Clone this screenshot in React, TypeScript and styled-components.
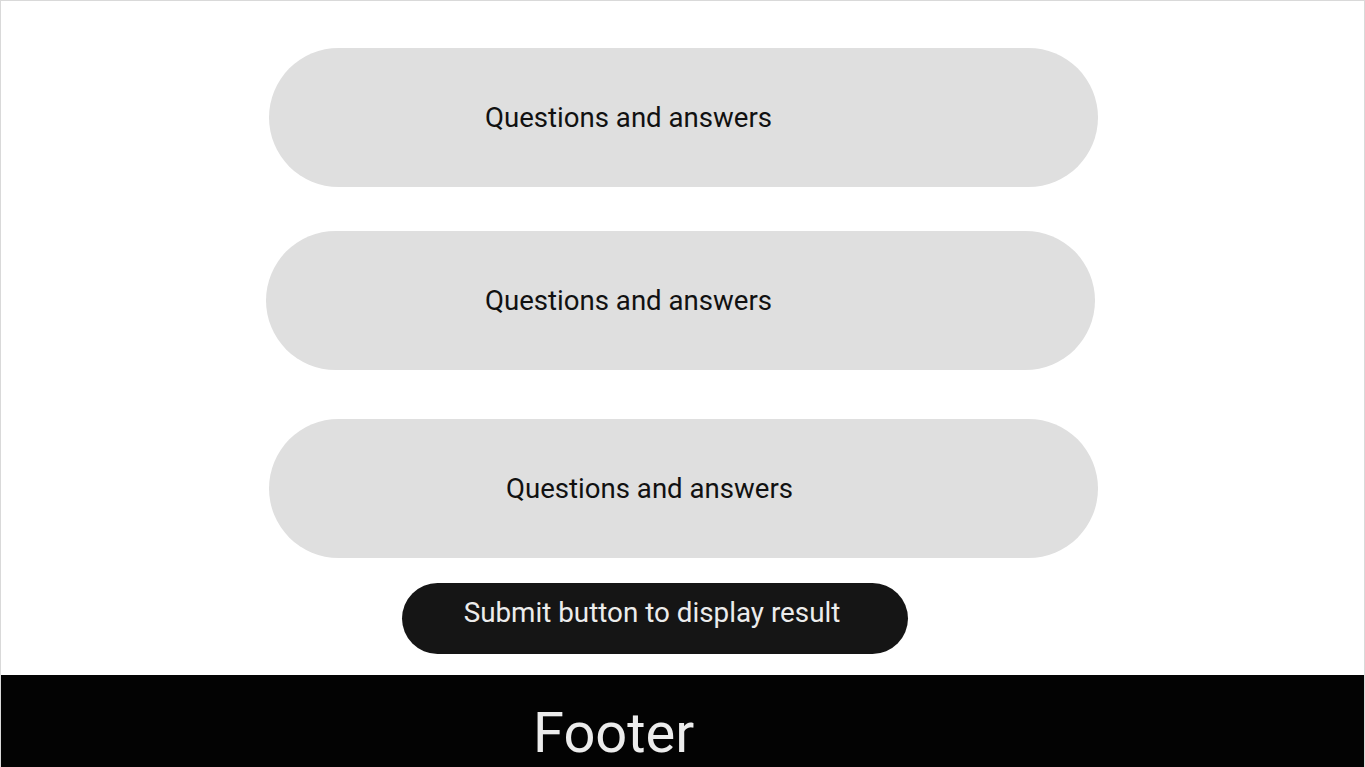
import React from 'react';
import styled, { createGlobalStyle } from 'styled-components';

const GlobalStyle = createGlobalStyle`
  html, body {
    margin: 0;
    padding: 0;
    background: #ffffff;
    font-family: Roboto, "Liberation Sans", Arial, sans-serif;
  }
`;

const Page = styled.div`
  border: 1px solid #d9d9d9;
  border-bottom: none;
  min-height: 766px;
  display: flex;
  flex-direction: column;
  overflow: hidden;
`;

const Main = styled.main`
  display: flex;
  flex-direction: column;
  align-items: flex-start;
  padding-top: 47px;
`;

const Card = styled.div<{ $left: number; $indent: number; $gap: number }>`
  box-sizing: border-box;
  width: 829px;
  height: 139px;
  margin-left: ${(p) => p.$left}px;
  margin-top: ${(p) => p.$gap}px;
  padding-left: ${(p) => p.$indent}px;
  border-radius: 70px;
  background: #dfdfdf;
  display: flex;
  align-items: center;
  font-size: 27.6px;
  color: #111111;
`;

const SubmitButton = styled.button`
  box-sizing: border-box;
  width: 506px;
  height: 71px;
  margin-left: 401px;
  margin-top: 25px;
  border: none;
  border-radius: 36px;
  background: #151515;
  color: #ececec;
  font-family: Roboto, "Liberation Sans", Arial, sans-serif;
  font-size: 27.8px;
  padding: 0 6px 12px 0;
  cursor: pointer;
`;

const Footer = styled.footer`
  margin-top: 21px;
  height: 100px;
  background: #030303;
  box-sizing: border-box;
  padding: 25px 0 0 532px;
  color: #ececec;
  font-size: 56px;
`;

const cards = [
  { left: 268, indent: 216, gap: 0 },
  { left: 265, indent: 219, gap: 44 },
  { left: 268, indent: 237, gap: 49 },
];

export default function App() {
  return (
    <>
      <GlobalStyle />
      <Page>
        <Main>
          {cards.map((c, i) => (
            <Card key={i} $left={c.left} $indent={c.indent} $gap={c.gap}>
              Questions and answers
            </Card>
          ))}
          <SubmitButton type="button">Submit button to display result</SubmitButton>
        </Main>
        <Footer>Footer</Footer>
      </Page>
    </>
  );
}
